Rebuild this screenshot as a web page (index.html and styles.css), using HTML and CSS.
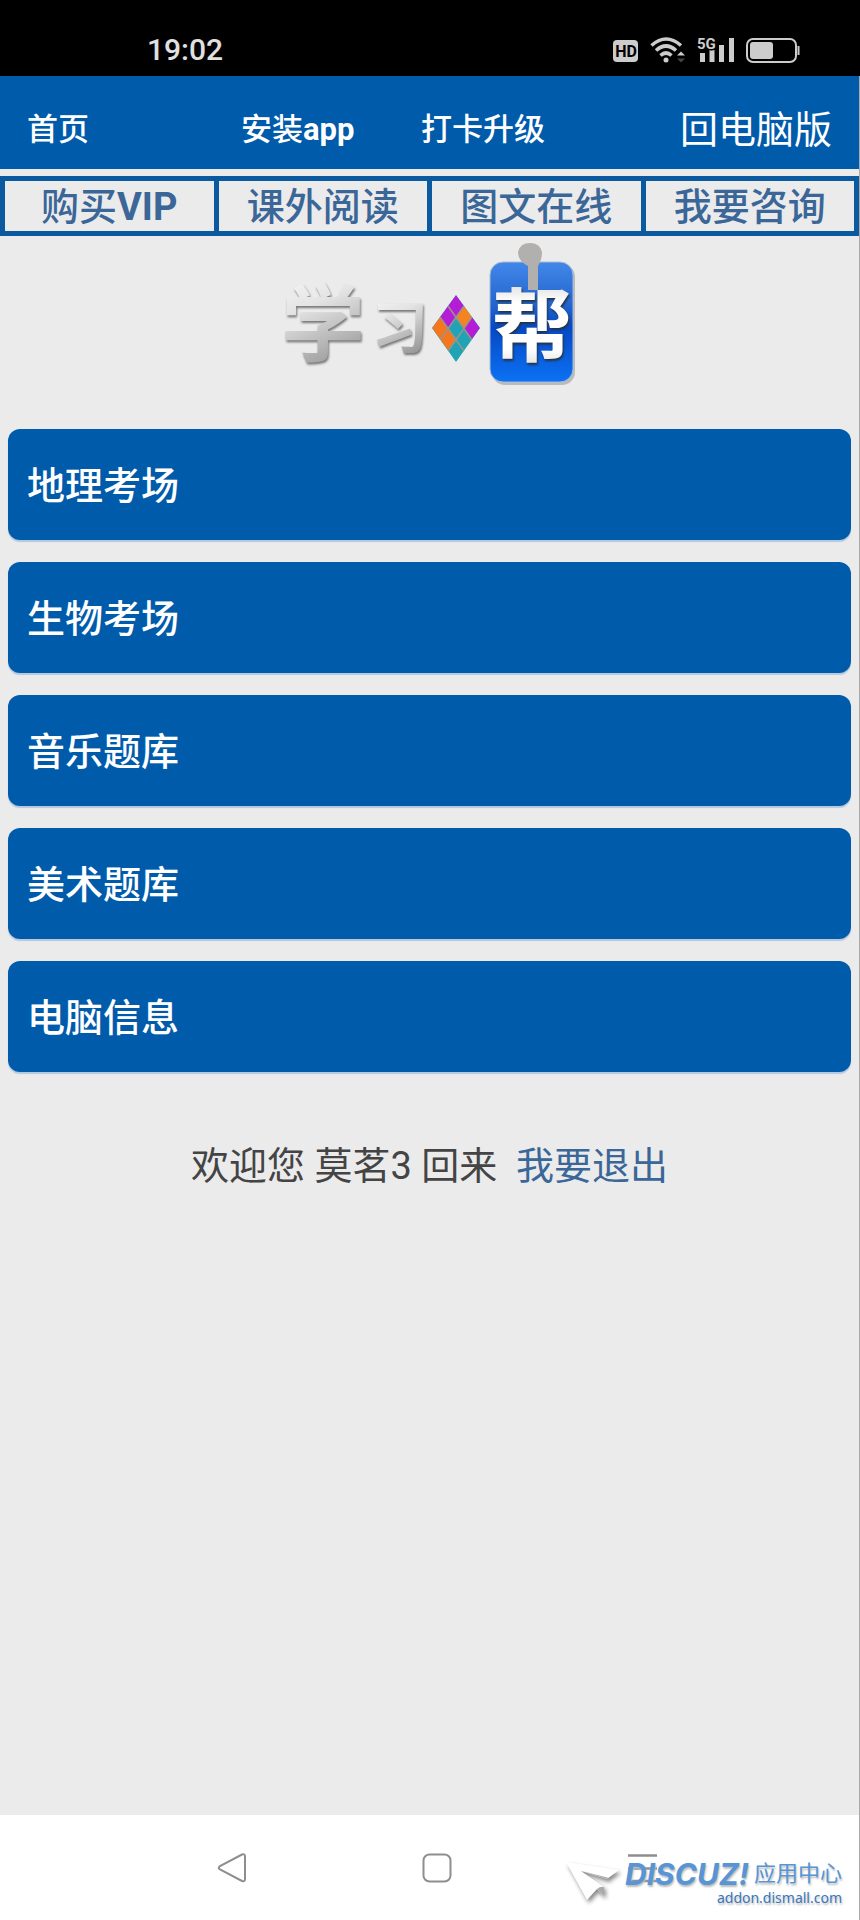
FILE: index.html
```html
<!DOCTYPE html>
<html lang="zh-CN">
<head>
<meta charset="utf-8">
<meta name="viewport" content="width=device-width, initial-scale=1">
<title>学习帮</title>
<link rel="stylesheet" href="styles.css">
</head>
<body>
<div class="status">
  <span class="clock">19:02</span>
  <div class="status-icons">
    <svg width="26" height="28" viewBox="0 0 26 28" aria-hidden="true">
      <rect x="0" y="4" width="25" height="22" rx="4" fill="#ccc"/>
      <text x="13" y="21" class="hd" text-anchor="middle">HD</text>
    </svg>
    <svg width="36" height="28" viewBox="0 0 36 28" aria-hidden="true">
      <g fill="none" stroke="#ccc" stroke-width="3.6">
        <path d="M1.5 9.500Q16 -3.500 31 9.500"/>
        <path d="M6 14.500Q16 5.500 26 14.500"/>
        <path d="M10.500 19.500Q16 14.500 21.500 19.500"/>
      </g>
      <circle cx="16" cy="24" r="2.500" fill="#ccc"/>
      <path d="M27 19.500l4-4 4 4z" fill="#ccc"/>
      <path d="M27 22.500l4 4 4-4z" fill="#444"/>
    </svg>
    <svg width="38" height="28" viewBox="0 0 38 28" aria-hidden="true">
      <path d="M3 17h5v9H3zM12.500 14h5v12h-5zM22 9h5v17h-5zM32 2h5v24h-5z" fill="#ccc"/>
      <text x="0" y="13" class="net">5G</text>
    </svg>
    <svg width="55" height="28" viewBox="0 0 55 28" aria-hidden="true">
      <rect x="1" y="3" width="49" height="23" rx="6" fill="none" stroke="#ccc" stroke-width="2"/>
      <rect x="4" y="6" width="23" height="17" rx="3" fill="#ccc"/>
      <path d="M51.500 10h2v9h-2z" fill="#ccc"/>
    </svg>
  </div>
</div>

<div class="page">
  <header class="topbar">
    <a class="top-link home" href="#">首页</a>
    <a class="top-link install" href="#">安装<b>app</b></a>
    <a class="top-link" href="#">打卡升级</a>
    <a class="desktop" href="#">回电脑版</a>
  </header>

  <nav class="tabs">
    <a href="#">购买<b>VIP</b></a>
    <a href="#">课外阅读</a>
    <a href="#">图文在线</a>
    <a href="#">我要咨询</a>
  </nav>

  <main>
    <svg class="logo" width="300" height="150" viewBox="0 0 300 150" role="img" aria-label="学习帮">
      <defs>
        <linearGradient id="silver" x1="0" y1="0" x2="0.300" y2="1">
          <stop offset="0" stop-color="#fff"/>
          <stop offset="0.450" stop-color="#e4e4e4"/>
          <stop offset="1" stop-color="#999"/>
        </linearGradient>
        <linearGradient id="white" x1="0" y1="0" x2="0" y2="1">
          <stop offset="0" stop-color="#bbb"/>
          <stop offset="0.350" stop-color="#fff"/>
          <stop offset="0.750" stop-color="#fff"/>
          <stop offset="1" stop-color="#ccc"/>
        </linearGradient>
        <linearGradient id="badge" x1="0" y1="0" x2="0" y2="1">
          <stop offset="0" stop-color="#4287e8"/>
          <stop offset="0.350" stop-color="#2366d0"/>
          <stop offset="0.550" stop-color="#0648c4"/>
          <stop offset="1" stop-color="#0c72f4"/>
        </linearGradient>
        <clipPath id="gem"><path d="M176 55l24 33-24 34-24-34z"/></clipPath>
      </defs>
      <text x="1" y="115" class="xue">学</text>
      <text x="92" y="108" class="xi">习</text>
      <g clip-path="url(#gem)">
        <path d="M152 55h48v67h-48z" fill="#1fa3b5"/>
        <path d="M176 55l8 11-16 22-8-11z" fill="#b51cd6"/>
        <path d="M184 66l8 11-8 11-8-11z" fill="#f58420"/>
        <path d="M192 77l8 11-8 11-8-11z" fill="#b51cd6"/>
        <path d="M160 77l16 22-8 11-16-22z" fill="#f5761d"/>
        <path d="M168 66l24 34M160 77l24 34M184 66l-24 34M192 77l-24 34" stroke="#98958a" stroke-width="1.500"/>
      </g>
      <rect x="212" y="24" width="83" height="121" rx="13" fill="#bbb"/>
      <rect x="210" y="22" width="83" height="120" rx="13" fill="url(#badge)" stroke="#a8bbd8"/>
      <path d="M238 12q2-9 12-9t12 9q0 8-4 14v24h-10V26q-10-5-10-14z" fill="#b2b0ae"/>
      <text x="252" y="115" class="bang" text-anchor="middle">帮</text>
    </svg>

    <div class="menu">
      <a href="#">地理考场</a>
      <a href="#">生物考场</a>
      <a href="#">音乐题库</a>
      <a href="#">美术题库</a>
      <a href="#">电脑信息</a>
    </div>

    <p class="welcome">欢迎您 莫茗3 回来&nbsp; <a href="#">我要退出</a></p>
  </main>

  <footer class="sysnav">
    <button type="button" aria-label="返回">
      <svg width="30" height="30" viewBox="0 0 30 30"><path d="M25 1.500Q28 0.500 28 3.500V26Q28 29 25 28L3 16.500Q0.500 15 3 13z" fill="none" stroke="#8e8e8e" stroke-width="2"/></svg>
    </button>
    <button type="button" aria-label="主屏幕">
      <svg width="30" height="30" viewBox="0 0 30 30"><rect x="1.500" y="1.500" width="27" height="27" rx="6" fill="none" stroke="#8e8e8e" stroke-width="2"/></svg>
    </button>
    <button type="button" aria-label="最近任务">
      <svg width="30" height="30" viewBox="0 0 30 30"><path d="M1 2.500h29M1 15.500h29M1 28h29" stroke="#8e8e8e" stroke-width="2.500"/></svg>
    </button>
    <div class="watermark">
      <svg class="plane" width="56" height="42" viewBox="0 0 56 42" aria-hidden="true">
        <path d="M1 1l53 8-12 9-26-8 23 16v9l-7-7-10 11z" fill="#fff"/>
        <path d="M17 10l25 8 2-1zM39 26v9l-7-7 3-2z" fill="#aaa"/>
      </svg>
      <div class="brand">
        <div class="brand-row"><span class="discuz">DISCUZ!</span><span>应用中心</span></div>
        <div class="site">addon.dismall.com</div>
      </div>
    </div>
  </footer>
</div>
</body>
</html>
```
FILE: styles.css
```css
* {
  box-sizing: border-box;
}

body {
  margin: 0;
  min-height: 100vh;
  display: flex;
  flex-direction: column;
  background: #ebebeb;
  color: #444;
  font-family: Roboto, "Noto Sans CJK SC", sans-serif;
}

a {
  text-decoration: none;
}

.status {
  display: flex;
  align-items: center;
  justify-content: space-between;
  height: 76px;
  padding: 24px 59px 0 147px;
  background: #000;
}

.clock {
  color: #e0e0e0;
  font-size: 30px;
  font-weight: 500;
  line-height: 52px;
}

.status-icons {
  display: flex;
  gap: 11px;
}

.hd {
  font: 700 16px Roboto, sans-serif;
  fill: #000;
}

.net {
  font: 700 15px Roboto, sans-serif;
  fill: #ccc;
  stroke: #000;
  stroke-width: 3px;
  paint-order: stroke;
}

.page {
  flex: 1;
  display: flex;
  flex-direction: column;
  border-right: 1px solid #aaa;
}

.topbar {
  display: flex;
  align-items: center;
  height: 93px;
  padding: 14px 27px 0 27px;
  background: #005bab;
  margin-bottom: 7px;
}

.top-link {
  color: #fff;
  font-size: 31px;
  font-weight: 500;
  line-height: 48px;
}

.home {
  flex: 0 0 214px;
}

.install {
  flex: 0 0 180px;
}

.desktop {
  margin-left: auto;
  color: #fff;
  font-size: 38px;
  line-height: 48px;
}

.tabs {
  display: grid;
  grid-template-columns: repeat(4, 1fr);
  gap: 5px;
  padding: 5px;
  background: #0b5a9f;
}

.tabs a {
  padding-top: 2px;
  background: #ebebeb;
  color: #3a6698;
  font-size: 38px;
  font-weight: 500;
  line-height: 48px;
  text-align: center;
}

main {
  flex: 1;
}

.logo {
  display: block;
  overflow: visible;
  margin: 4px auto 39px;
}

.xue,
.xi,
.bang {
  font-family: "Noto Sans CJK SC", sans-serif;
  font-weight: 700;
}

.xue,
.xi {
  fill: url(#silver);
  filter: drop-shadow(1px 2px 1px #777);
}

.xue {
  font-size: 84px;
}

.xi {
  font-size: 56px;
}

.bang {
  font-size: 80px;
  fill: url(#white);
  filter: drop-shadow(1px 2px 1px #234);
}

.menu {
  display: flex;
  flex-direction: column;
  gap: 22px;
  padding: 0 8px;
}

.menu a {
  padding: 29px 19px 26px;
  border-radius: 12px;
  background: #005bab;
  box-shadow: 0 2px 1px #b4c8df;
  color: #fff;
  font-size: 38px;
  font-weight: 500;
  line-height: 56px;
}

.welcome {
  margin: 66px 0;
  font-size: 38px;
  line-height: 56px;
  text-align: center;
}

.welcome a {
  color: #3a6698;
}

.sysnav {
  position: relative;
  display: flex;
  justify-content: center;
  align-items: center;
  height: 105px;
  padding-left: 14px;
  background: #fff;
}

.sysnav button {
  display: flex;
  justify-content: center;
  width: 205px;
  padding: 10px 0;
  border: 0;
  background: none;
}

.watermark {
  position: absolute;
  right: 17px;
  bottom: 14px;
  display: flex;
  align-items: center;
  gap: 4px;
  color: #5795d6;
}

.plane {
  filter: drop-shadow(2px 3px 2px #888);
}

.brand {
  text-align: right;
  text-shadow: 1px 2px 2px #bbb;
}

.brand-row {
  display: flex;
  align-items: center;
  gap: 5px;
  font-size: 22px;
  line-height: 32px;
}

.discuz {
  font-family: Inter, sans-serif;
  font-size: 30px;
  font-style: italic;
  font-weight: 700;
}

.site {
  color: #3a77b8;
  font-family: "Noto Sans", sans-serif;
  font-size: 14px;
  line-height: 16px;
}
```
